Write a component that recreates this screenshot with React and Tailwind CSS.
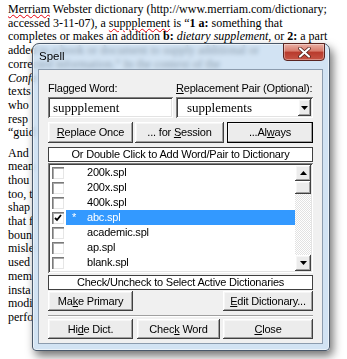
import React from 'react';

const ui = "font-['Liberation_Sans',Arial,sans-serif] text-[11px] tracking-[-0.2px] text-black";
const raised =
  'bg-[#ececec] shadow-[inset_-1px_-1px_#404040,inset_1px_1px_#ffffff,inset_-2px_-2px_#a0a0a0,inset_2px_2px_#f6f6f6]';
const sunken =
  'bg-white shadow-[inset_1px_1px_#808080,inset_-1px_-1px_#ffffff,inset_2px_2px_#404040,inset_-2px_-2px_#e3e3e3]';

const dicts = [
  { name: '200k.spl' },
  { name: '200x.spl' },
  { name: '400k.spl' },
  { name: 'abc.spl', checked: true, primary: true, selected: true },
  { name: 'academic.spl' },
  { name: 'ap.spl' },
  { name: 'blank.spl' },
];

// only the left edge of these lines shows past the dialog
const hiddenLines = [
  { t: 'Confe', i: true },
  { t: 'texts' },
  { t: 'who' },
  { t: 'resp' },
  { t: '“guid' },
  { t: 'And', gap: true },
  { t: 'mean' },
  { t: 'thou' },
  { t: 'too, t' },
  { t: 'shap' },
  { t: 'that f' },
  { t: 'boun' },
  { t: 'misle' },
  { t: 'used' },
  { t: 'mem' },
  { t: 'insta' },
  { t: 'modi' },
  { t: 'perfo' },
];

function Btn({ className = '', def = false, children }) {
  return (
    <div
      className={`${className} ${raised} h-full flex items-center justify-center leading-none ${
        def ? 'outline outline-1 outline-black -outline-offset-1' : ''
      }`}
    >
      <span>{children}</span>
    </div>
  );
}

function Arrow({ up = false }) {
  return (
    <svg width="7" height="4" viewBox="0 0 7 4">
      <path d={up ? 'M0 4 L7 4 L3.5 0 Z' : 'M0 0 L7 0 L3.5 4 Z'} fill="#000" />
    </svg>
  );
}

function CheckBox({ checked }) {
  return (
    <div className="w-[12px] h-[12px] bg-white shadow-[inset_1px_1px_#7a7a7a,inset_2px_2px_#a9a9a9,inset_-1px_-1px_#e6e6e6] flex items-center justify-center">
      {checked && (
        <svg width="8" height="8" viewBox="0 0 8 8">
          <path d="M1 4 L3 6 L7 1" stroke="#000" strokeWidth="1.8" fill="none" />
        </svg>
      )}
    </div>
  );
}

function Doc() {
  return (
    <div className="pl-[8px] pt-[3px] font-['Liberation_Serif','Times_New_Roman',serif] text-[12px] leading-[13.7px] text-black whitespace-nowrap">
      <div>
        <span className="underline decoration-wavy decoration-red-600 decoration-1">Merriam</span> Webster dictionary
        (http://www.merriam.com/dictionary;
      </div>
      <div>
        accessed 3-11-07), a <span className="underline decoration-wavy decoration-red-600 decoration-1">suppplement</span>{' '}
        is “<b>1 a:</b> something that
      </div>
      <div>
        completes or makes an addition <b>b:</b> <i>dietary supplement</i>, or <b>2:</b> a part
      </div>
      <div>added to a book or document to supply additional or</div>
      <div>corrected information.” In the context of the</div>
      <div>
        {hiddenLines.map((l, idx) => (
          <div key={idx} className={l.gap ? 'mt-[6.5px]' : ''}>
            {l.i ? <i>{l.t}</i> : l.t}
          </div>
        ))}
      </div>
    </div>
  );
}

function Window() {
  return (
    <div className="absolute left-[32px] top-[43px] w-[298px] h-[308px] flex flex-col rounded-t-[7px] rounded-b-[4px] border border-[#49586a] bg-[rgba(192,216,238,0.72)] backdrop-blur-[2px] shadow-[3px_5px_10px_rgba(0,0,0,0.55),inset_0_0_0_1px_rgba(255,255,255,0.55)]">
      {/* Title bar */}
      <div className="h-[25px] flex items-center pl-[6px] font-['Liberation_Sans',Arial,sans-serif] text-[11.5px] text-black">
        Spell
      </div>
      <div className="absolute right-[4px] top-[-1px] w-[42px] h-[18px] rounded-b-[4px] border border-[#5a2420] bg-[image:linear-gradient(#eab0a4,#d77a6a_45%,#b83a2c_50%,#c65444)] shadow-[inset_0_0_0_1px_rgba(255,255,255,0.35)] flex items-center justify-center">
        <svg width="13" height="11" viewBox="0 0 13 11">
          <path d="M2 1.5 L11 9.5 M11 1.5 L2 9.5" stroke="#4a1a14" strokeWidth="3.6" strokeLinecap="round" />
          <path d="M2 1.5 L11 9.5 M11 1.5 L2 9.5" stroke="#ffffff" strokeWidth="2.2" strokeLinecap="round" />
        </svg>
      </div>

      {/* Client */}
      <div className={`flex-1 ml-[5px] mr-[6px] mb-[6px] border border-[#8c9cae] bg-[#f0f0f0] px-[9px] pt-[12px] flex flex-col ${ui}`}>
        <div className="flex h-[13px] leading-[13px]">
          <div className="w-[128px]">Flagged Word:</div>
          <div>
            <u>R</u>eplacement Pair (Optional):
          </div>
        </div>

        <div className="mt-[2px] flex gap-[3px] h-[21px]">
          <div className={`w-[125px] h-full ${sunken} flex items-center pl-[5px] font-['Liberation_Serif','Times_New_Roman',serif] text-[13px] tracking-normal`}>
            suppplement
          </div>
          <div className={`w-[137px] h-full ${sunken} flex items-center pl-[11px] pr-[2px] font-['Liberation_Serif','Times_New_Roman',serif] text-[13px] tracking-normal`}>
            <span className="flex-1">supplements</span>
            <div className={`w-[13px] h-[17px] ${raised} flex items-center justify-center`}>
              <Arrow />
            </div>
          </div>
        </div>

        <div className="mt-[4px] flex h-[21px]">
          <Btn className="w-[85px]">
            <u>R</u>eplace Once
          </Btn>
          <Btn className="w-[89px] ml-[2px]">
            ... for <u>S</u>ession
          </Btn>
          <Btn className="w-[86px] ml-[3px]" def>
            ...Al<u>w</u>ays
          </Btn>
        </div>

        <div className="mt-[4px] h-[15px] border border-[#404040] bg-white flex items-center justify-center">
          Or Double Click to Add Word/Pair to Dictionary
        </div>

        <div className={`mt-[1px] h-[110px] ${sunken} p-[2px] flex`}>
          <div className="flex-1 flex flex-col">
            {dicts.map((d) => (
              <div key={d.name} className="h-[15px] flex items-center">
                <div className="ml-[2px] w-[14px]">
                  <CheckBox checked={d.checked} />
                </div>
                <div
                  className={`flex-1 h-full flex items-center ${
                    d.selected ? 'bg-[#3399ff] text-white' : ''
                  }`}
                >
                  <span className="w-[21px] pl-[6px]">{d.primary ? '*' : ''}</span>
                  <span>{d.name}</span>
                </div>
              </div>
            ))}
          </div>
          <div className="w-[16px] flex flex-col">
            <div className={`h-[16px] ${raised} flex items-center justify-center`}>
              <Arrow up />
            </div>
            <div className={`h-[13px] ${raised}`} />
            <div className="flex-1 bg-[image:repeating-conic-gradient(#e2e2e2_0%_25%,#ffffff_0%_50%)] bg-[length:2px_2px]" />
            <div className={`h-[16px] ${raised} flex items-center justify-center`}>
              <Arrow />
            </div>
          </div>
        </div>

        <div className="mt-[2px] h-[15px] border border-[#404040] bg-white flex items-center justify-center">
          Check/Uncheck to Select Active Dictionaries
        </div>

        <div className="mt-[1px] flex justify-between h-[20px]">
          <Btn className="w-[85px]">
            Ma<u>k</u>e Primary
          </Btn>
          <Btn className="w-[90px]">
            <u>E</u>dit Dictionary...
          </Btn>
        </div>

        <div className="mt-[4px] h-[2px] border-t border-[#a0a0a0] border-b border-b-white" />

        <div className="mt-[2px] flex h-[20px]">
          <Btn className="w-[85px]">
            Hi<u>d</u>e Dict.
          </Btn>
          <Btn className="w-[83px] ml-[4px]">
            Chec<u>k</u> Word
          </Btn>
          <Btn className="w-[90px] ml-[3px]">
            <u>C</u>lose
          </Btn>
        </div>
      </div>
    </div>
  );
}

export default function App() {
  return (
    <div className="relative w-[347px] h-[359px] overflow-hidden bg-white">
      <Doc />
      <Window />
    </div>
  );
}
